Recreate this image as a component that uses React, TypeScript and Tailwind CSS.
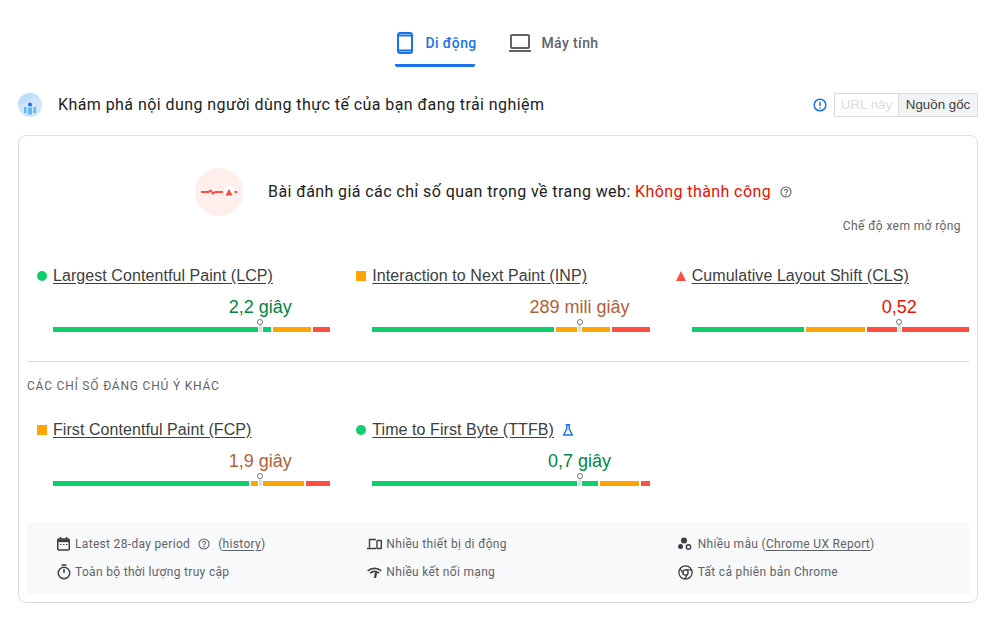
import React from "react";

const RED = "#ff4e42";

type Metric = {
  name: string;
  value: string;
  color: string;
  kind: "circle" | "square" | "triangle";
  segs: [number, number, number];
  marker: number;
  flask?: boolean;
};

function Bullet({ kind }: { kind: Metric["kind"] }) {
  if (kind === "circle") return <span className="w-2.5 h-2.5 rounded-full bg-[#0cce6b] shrink-0" />;
  if (kind === "square") return <span className="w-2.5 h-2.5 bg-[#ffa400] shrink-0" />;
  return (
    <svg width="10" height="10" viewBox="0 0 10 10" className="shrink-0">
      <path d="M5 0 L10 10 L0 10 Z" fill={RED} />
    </svg>
  );
}

function MetricCard({ m }: { m: Metric }) {
  const total = m.segs[0] + m.segs[1] + m.segs[2] + 4;
  const pct = (m.marker / total) * 100;
  return (
    <div className="flex flex-col font-['Liberation_Sans',Arial,sans-serif]">
      <div className="flex items-center gap-[6px] pl-[10px] h-5">
        <Bullet kind={m.kind} />
        <span className="underline underline-offset-2 text-[16px] leading-5 tracking-[0.07px] text-[#3c4043] decoration-[#3c4043]">{m.name}</span>
        {m.flask && (
          <svg width="14" height="14" viewBox="0 0 24 24" className="ml-[1px]" fill="none" stroke="#1a73e8" strokeWidth="2.4">
            <path d="M8 3h8M10 3v7L4.5 20.5h15L14 10V3" />
          </svg>
        )}
      </div>
      <div className="pl-[26px]">
        <div className="flex h-[22px] mt-[10px]">
          <div className="shrink-0" style={{ width: `${pct}%` }} />
          <div className="w-0 flex justify-center">
            <span className="whitespace-nowrap text-[18px] leading-[22px]" style={{ color: m.color }}>{m.value}</span>
          </div>
        </div>
        <div className="relative flex gap-[2px] h-[5px] mt-[9px]">
          <div className="h-full bg-[#0cce6b]" style={{ flexGrow: m.segs[0], flexBasis: 0 }} />
          <div className="h-full bg-[#ffa400]" style={{ flexGrow: m.segs[1], flexBasis: 0 }} />
          <div className="h-full bg-[#ff4e42]" style={{ flexGrow: m.segs[2], flexBasis: 0 }} />
          <div className="absolute top-[-8px] w-[7px] h-[13px] flex flex-col items-center" style={{ left: `calc(${pct}% - 3.5px)` }}>
            <span className="w-[6px] h-[6px] rounded-full border border-[#757575] bg-white shrink-0" />
            <span className="w-[3px] flex-1 bg-[#cfe3dc] border-x border-white box-content" />
          </div>
        </div>
      </div>
    </div>
  );
}

const primary: Metric[] = [
  { name: "Largest Contentful Paint (LCP)", value: "2,2 giây", color: "#018642", kind: "circle", segs: [218, 38, 17], marker: 207 },
  { name: "Interaction to Next Paint (INP)", value: "289 mili giây", color: "#b15f36", kind: "square", segs: [181, 54, 38], marker: 207 },
  { name: "Cumulative Layout Shift (CLS)", value: "0,52", color: "#eb0f00", kind: "triangle", segs: [113, 59, 102], marker: 208 },
];
const secondary: Metric[] = [
  { name: "First Contentful Paint (FCP)", value: "1,9 giây", color: "#b15f36", kind: "square", segs: [196, 53, 24], marker: 207 },
  { name: "Time to First Byte (TTFB)", value: "0,7 giây", color: "#018642", kind: "circle", segs: [225, 39, 9], marker: 207, flask: true },
];

function Help({ size = 12 }: { size?: number }) {
  return (
    <svg width={size} height={size} viewBox="0 0 24 24" fill="none" stroke="#5f6368" strokeWidth="2.2" className="shrink-0">
      <circle cx="12" cy="12" r="10" />
      <path d="M9 9.5a3 3 0 1 1 4.6 2.5c-1 .6-1.6 1.2-1.6 2.5" />
      <circle cx="12" cy="17.5" r="0.6" fill="#5f6368" />
    </svg>
  );
}

const ic = "#3c4043";

function FooterItem({ icon, children, iconWidth }: { icon: React.ReactNode; children: React.ReactNode; iconWidth: string }) {
  return (
    <div className="flex items-center h-7 text-[12px] tracking-[0.32px] text-[#5f6368]">
      <span className={`${iconWidth} flex items-center shrink-0`}>{icon}</span>
      {children}
    </div>
  );
}

export default function App() {
  return (
    <div className="w-[1002px] h-[617px] bg-white overflow-hidden font-['Roboto','Noto_Sans',sans-serif] text-[#202124]">
      <div className="flex justify-center h-[67px] pr-[8px]">
        <div className="flex items-start">
          <div className="w-[80px] h-[67px] pt-[31px] border-b-[3px] border-[#1a73e8] rounded-b-[2px] flex items-start pl-[1px] gap-[11px]">
            <svg width="18" height="24" viewBox="0 0 18 24" fill="none" stroke="#1a73e8" strokeWidth="2" className="shrink-0">
              <rect x="2" y="2" width="14" height="20" rx="2" />
              <path d="M2 4.5h14M2 19.5h14" />
            </svg>
            <span className="text-[14px] leading-6 font-medium whitespace-nowrap text-[#1a73e8] tracking-[0.4px]">Di động</span>
          </div>
          <div className="ml-[33px] pt-[31px] flex items-start gap-[9px]">
            <svg width="24" height="24" viewBox="0 0 24 24" fill="none" stroke="#5f6368" strokeWidth="2" className="shrink-0">
              <rect x="3" y="4" width="18" height="13" rx="1" />
              <path d="M1 20h22" />
            </svg>
            <span className="text-[14px] leading-6 font-medium whitespace-nowrap text-[#5f6368] tracking-[0.4px]">Máy tính</span>
          </div>
        </div>
      </div>

      <div className="ml-[18px] mr-6 mt-[26px] h-6 flex items-center">
        <svg width="24" height="24" viewBox="0 0 24 24" className="shrink-0">
          <circle cx="12" cy="12" r="12" fill="#d2e3fc" />
          <path d="M0 12A12 12 0 0 1 12 0c4 0 7 2 9 5-5-2-9 0-12 3-3 3-6 4-9 4Z" fill="#bbdefb" />
          <circle cx="12" cy="11.5" r="2" fill="#1a73e8" />
          <rect x="6" y="14" width="2.5" height="6" fill="#64b5f6" />
          <rect x="10" y="14.5" width="4" height="7" fill="#64b5f6" />
          <rect x="15.5" y="14" width="2.5" height="6" fill="#64b5f6" />
        </svg>
        <span className="ml-4 text-[16px] tracking-[0.43px] font-[450] text-[#202124]">Khám phá nội dung người dùng thực tế của bạn đang trải nghiệm</span>
        <div className="ml-auto flex items-center font-['Liberation_Sans',Arial,sans-serif]">
          <svg width="14" height="14" viewBox="0 0 24 24" fill="none" stroke="#1a73e8" strokeWidth="2.6" className="mr-[7px]">
            <circle cx="12" cy="12" r="10" />
            <path d="M12 6.5v7M12 16v2" />
          </svg>
          <span className="w-[65px] h-6 flex items-center justify-center border border-[#dadce0] text-[13.33px] text-[#dadce0]">URL này</span>
          <span className="w-[79px] h-6 flex items-center justify-center border border-[#dadce0] border-l-0 bg-[#f1f3f4] text-[13.33px] text-[#3c4043]">Nguồn gốc</span>
        </div>
      </div>

      <div className="ml-[18px] mr-6 mt-[18px] h-[468px] border border-[#dadce0] rounded-lg px-2 flex flex-col">
        <div className="flex items-center pl-[168px] mt-[32px] h-12">
          <div className="w-12 h-12 rounded-full bg-[#feeeec] flex items-center justify-center shrink-0">
            <svg width="36" height="14" viewBox="0 0 36 14">
              <path d="M0 7h7.5l2 -1.5 2.5 3 2.5-1.5h8" fill="none" stroke={RED} strokeWidth="2" />
              <circle cx="28" cy="6.5" r="6" fill="#ffffff" />
              <path d="M24.3 10.5l3.7-6.5 3.7 6.5Z" fill={RED} />
              <path d="M33.5 7H36" stroke={RED} strokeWidth="2" />
            </svg>
          </div>
          <span className="ml-[25px] text-[16px] tracking-[0.41px] font-[450] text-[#202124]">
            Bài đánh giá các chỉ số quan trọng về trang web: <span className="text-[#eb0f00]">Không thành công</span>
          </span>
          <span className="ml-[9px]"><Help size={12} /></span>
        </div>
        <div className="text-right pr-[8px] text-[12px] leading-4 mt-[2px] tracking-[0.4px] text-[#5f6368]">Chế độ xem mở rộng</div>

        <div className="grid grid-cols-3 gap-x-4 mt-[32px]">
          {primary.map((m) => <MetricCard key={m.name} m={m} />)}
        </div>

        <div className="h-px bg-[#dadce0] mt-[29px]" />
        <div className="mt-4 text-[12px] leading-4 tracking-[0.8px] text-[#5f6368]">CÁC CHỈ SỐ ĐÁNG CHÚ Ý KHÁC</div>

        <div className="grid grid-cols-3 gap-x-4 mt-[26px]">
          {secondary.map((m) => <MetricCard key={m.name} m={m} />)}
        </div>

        <div className="mt-[36px] h-[72px] bg-[#f8f9fa] rounded-[4px] py-2 grid grid-cols-3 gap-x-4">
          <div className="pl-[30px]">
            <FooterItem iconWidth="w-[18px]" icon={
              <svg width="13" height="14" viewBox="0 0 13 14" fill="none" stroke={ic}>
                <rect x="0.75" y="2" width="11.5" height="11" rx="1" strokeWidth="1.5" />
                <path d="M0.75 3.7h11.5" strokeWidth="3" />
                <path d="M3.5 0v2M9.5 0v2" strokeWidth="1.5" />
                <path d="M3 7.5h1.5M6 7.5h1.5M9 7.5h1.5" strokeWidth="1" />
              </svg>
            }>
              <span>Latest 28-day period</span>
              <span className="mx-[8px]"><Help size={12} /></span>
              <span>(<span className="underline underline-offset-2">history</span>)</span>
            </FooterItem>
            <FooterItem iconWidth="w-[18px]" icon={
              <svg width="14" height="16" viewBox="0 0 14 16" fill="none" stroke={ic} strokeWidth="1.5">
                <circle cx="7" cy="9" r="5.75" />
                <path d="M4.5 1h5M7 5v4" />
              </svg>
            }>
              <span>Toàn bộ thời lượng truy cập</span>
            </FooterItem>
          </div>
          <div className="pl-[21px]">
            <FooterItem iconWidth="w-[19px]" icon={
              <svg width="15" height="12" viewBox="0 0 15 12" fill="none" stroke={ic} strokeWidth="1.4">
                <path d="M9 1.5H2.5v8M0 10.5h9" />
                <rect x="10" y="2.5" width="4.3" height="8" rx="0.6" />
              </svg>
            }>
              <span>Nhiều thiết bị di động</span>
            </FooterItem>
            <FooterItem iconWidth="w-[19px]" icon={
              <svg width="15" height="11" viewBox="0 0 15 11" fill="none" stroke={ic}>
                <path d="M0.7 3.8C4.5 0.5 10.5 0.5 14.3 3.8" strokeWidth="1.6" />
                <path d="M3 6.2c2.8-2.2 6.2-2.2 9 0" strokeWidth="1.6" />
                <path d="M8 11L9 5.5" strokeWidth="2.2" />
              </svg>
            }>
              <span>Nhiều kết nối mạng</span>
            </FooterItem>
          </div>
          <div className="pl-[12px]">
            <FooterItem iconWidth="w-[20px]" icon={
              <svg width="14" height="14" viewBox="0 0 14 14" fill={ic}>
                <circle cx="6" cy="3.5" r="3" />
                <circle cx="2.5" cy="9.5" r="2.5" />
                <circle cx="10.5" cy="10" r="2.2" fill="none" stroke={ic} strokeWidth="1.4" />
              </svg>
            }>
              <span>Nhiều mẫu (<span className="underline underline-offset-2">Chrome UX Report</span>)</span>
            </FooterItem>
            <FooterItem iconWidth="w-[20px]" icon={
              <svg width="15" height="15" viewBox="0 0 15 15" fill="none" stroke={ic} strokeWidth="1.3">
                <circle cx="7.5" cy="7.5" r="6.6" />
                <circle cx="7.5" cy="7.5" r="2.6" />
                <path d="M7.5 4.9h6M5.2 8.8L2.2 3.5M9.8 8.8L6.8 14" />
              </svg>
            }>
              <span>Tất cả phiên bản Chrome</span>
            </FooterItem>
          </div>
        </div>
      </div>
    </div>
  );
}
